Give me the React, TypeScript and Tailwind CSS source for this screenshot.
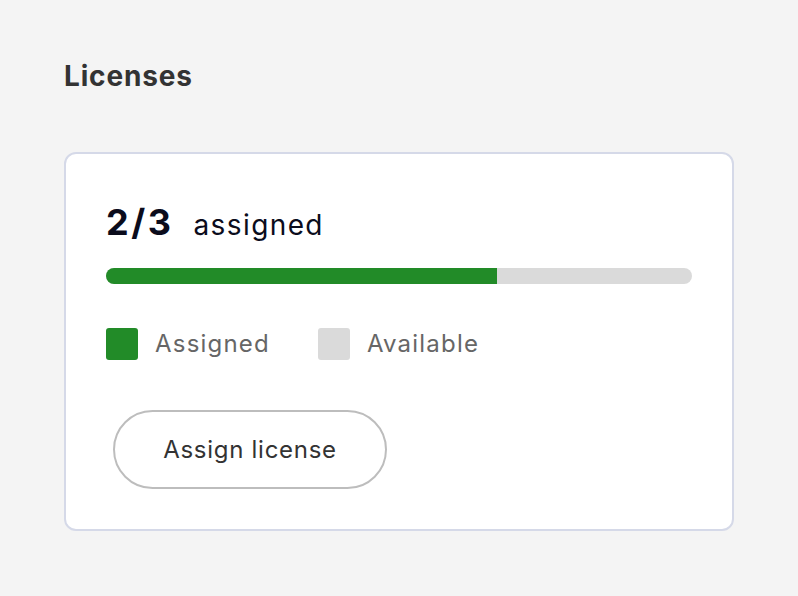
export default function App() {
  const assigned = 2
  const total = 3
  const pct = (assigned / total) * 100

  return (
    <div className="min-h-screen bg-[#f4f4f4] px-[64px] pt-[58px] font-['Inter',sans-serif]">
      <h2 className="text-[28px] font-bold leading-[36px] tracking-[0.03em] text-[#333333]">Licenses</h2>

      <div className="mt-[58px] w-[670px] rounded-[12px] border-2 border-[#d5d9e8] bg-white px-[40px] pt-[48px] pb-[40px]">
        <div className="flex items-baseline gap-[20px] leading-[40px]">
          <span className="text-[36px] font-bold tracking-[0.07em] text-[#0b0c1c]">
            {assigned}/{total}
          </span>
          <span className="text-[28px] tracking-[0.05em] text-[#0b0c1c]">assigned</span>
        </div>

        <div className="mt-[23px] flex h-[16px] w-full overflow-hidden rounded-full bg-[#dadada]">
          <div className="h-full bg-[#228b28]" style={{ width: `${pct}%` }} />
        </div>

        <div className="mt-[42px] flex items-center gap-[48px]">
          <div className="flex items-center gap-[17px]">
            <span className="h-[32px] w-[32px] rounded-[3px] bg-[#228b28]" />
            <span className="text-[24px] tracking-[0.05em] text-[#666666]">Assigned</span>
          </div>
          <div className="flex items-center gap-[17px]">
            <span className="h-[32px] w-[32px] rounded-[3px] bg-[#dadada]" />
            <span className="text-[24px] tracking-[0.05em] text-[#666666]">Available</span>
          </div>
        </div>

        <button className="mt-[48px] ml-[7px] flex h-[79px] w-[274px] items-center justify-center rounded-full border-2 border-[#bdbdbd] bg-white text-[24px] tracking-[0.03em] text-[#333333]">
          Assign license
        </button>
      </div>
    </div>
  )
}
